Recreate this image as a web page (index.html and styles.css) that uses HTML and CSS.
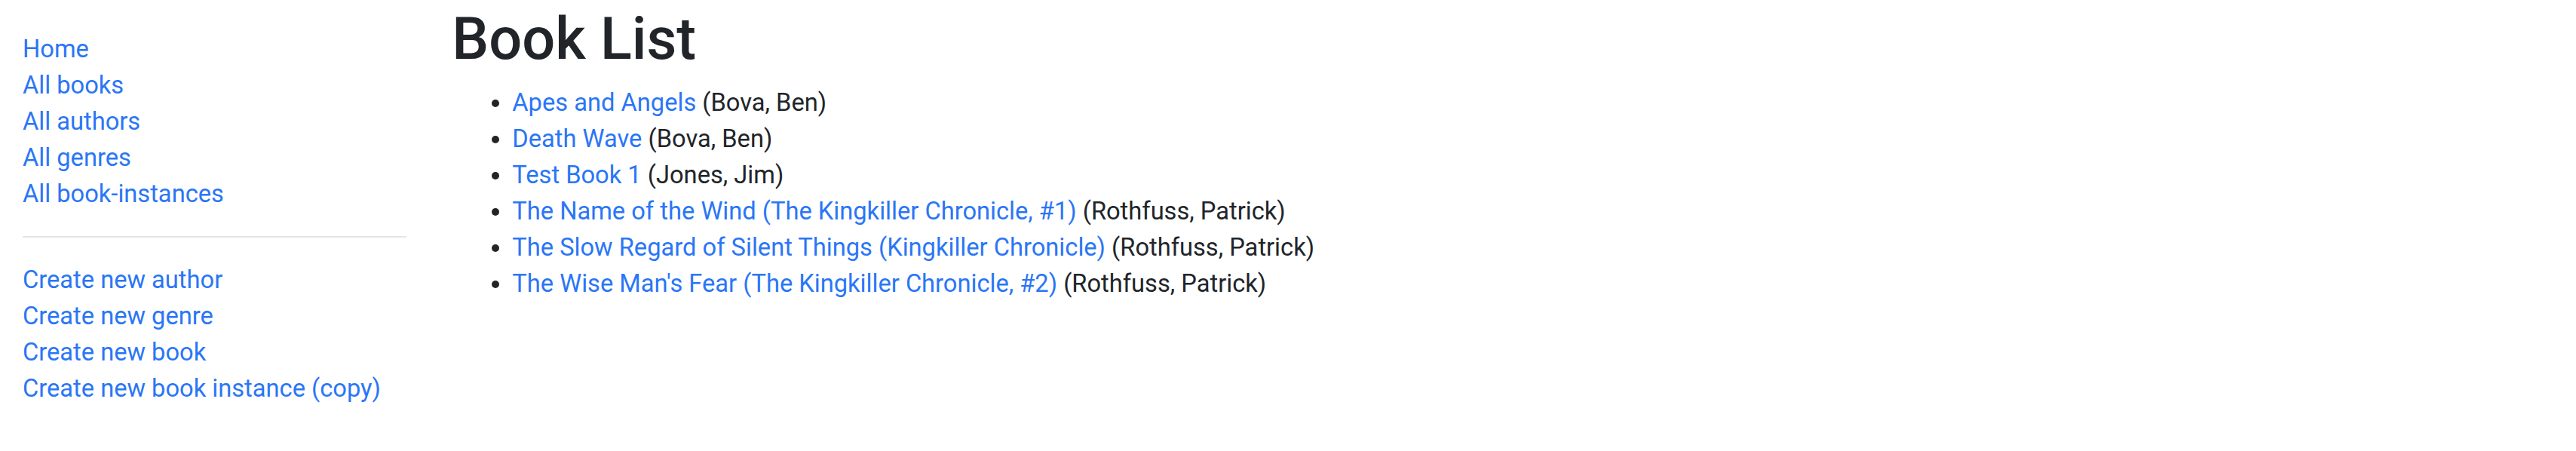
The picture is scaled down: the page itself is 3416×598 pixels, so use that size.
FILE: index.html
```html
<!DOCTYPE html>
<html lang="en">
<head>
<meta charset="utf-8">
<title>Local Library</title>
<link rel="stylesheet" href="styles.css">
</head>
<body>
<div class="container-fluid">
  <div class="row">
    <div class="col-sidebar">
      <ul class="sidebar-nav">
        <li><a href="#">Home</a></li>
        <li><a href="#">All books</a></li>
        <li><a href="#">All authors</a></li>
        <li><a href="#">All genres</a></li>
        <li><a href="#">All book-instances</a></li>
        <li><hr class="divider"></li>
        <li><a href="#">Create new author</a></li>
        <li><a href="#">Create new genre</a></li>
        <li><a href="#">Create new book</a></li>
        <li><a href="#">Create new book instance (copy)</a></li>
      </ul>
    </div>
    <div class="col-main">
      <h1 class="page-title">Book List</h1>
      <ul class="book-list">
        <li><a href="#">Apes and Angels</a> (Bova, Ben)</li>
        <li><a href="#">Death Wave</a> (Bova, Ben)</li>
        <li><a href="#">Test Book 1</a> (Jones, Jim)</li>
        <li><a href="#">The Name of the Wind (The Kingkiller Chronicle, #1)</a> (Rothfuss, Patrick)</li>
        <li><a href="#">The Slow Regard of Silent Things (Kingkiller Chronicle)</a> (Rothfuss, Patrick)</li>
        <li><a href="#">The Wise Man's Fear (The Kingkiller Chronicle, #2)</a> (Rothfuss, Patrick)</li>
      </ul>
    </div>
  </div>
</div>
</body>
</html>
```

FILE: styles.css
```css
html, body {
  margin: 0;
  padding: 0;
}

body {
  font-family: Roboto, "Liberation Sans", Arial, sans-serif;
  font-size: 32.65px;
  line-height: 48px;
  color: #212529;
  background: #ffffff;
}

a {
  color: #2a76f6;
  text-decoration: none;
}

.container-fluid {
  padding: 0 30px;
}

.row {
  display: flex;
  margin: 0 -30px;
}

.col-sidebar {
  flex: 0 0 16.6667%;
  max-width: 16.6667%;
  padding: 0 30px;
  box-sizing: border-box;
}

.col-main {
  flex: 0 0 83.3333%;
  max-width: 83.3333%;
  padding: 0 30px;
  box-sizing: border-box;
}

.sidebar-nav {
  margin: 41px 0 0;
  padding: 0;
  list-style: none;
}

.divider {
  margin: 32px 0;
  border: 0;
  border-top: 2px solid rgba(0, 0, 0, 0.1);
  height: 0;
}

.page-title {
  margin: 4px 0 12px;
  font-size: 77.5px;
  font-weight: 500;
  line-height: 96px;
}

.book-list {
  margin: 0 0 32px;
  padding-left: 80px;
}
```
